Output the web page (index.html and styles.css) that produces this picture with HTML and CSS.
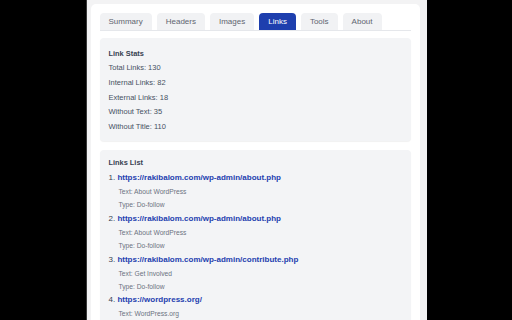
FILE: index.html
```html
<!DOCTYPE html>
<html>
<head>
<meta charset="utf-8">
<link rel="stylesheet" href="styles.css">
</head>
<body>
<div class="panel">
  <div class="card">
    <div class="tabs">
      <div class="tab">Summary</div>
      <div class="tab">Headers</div>
      <div class="tab">Images</div>
      <div class="tab active">Links</div>
      <div class="tab">Tools</div>
      <div class="tab">About</div>
    </div>
    <div class="box stats">
      <div class="title">Link Stats</div>
      <div class="row">Total Links: 130</div>
      <div class="row">Internal Links: 82</div>
      <div class="row">External Links: 18</div>
      <div class="row">Without Text: 35</div>
      <div class="row">Without Title: 110</div>
    </div>
    <div class="box list">
      <div class="title">Links List</div>
      <div class="item">
        <div class="link">1. <a>https://rakibalom.com/wp-admin/about.php</a></div>
        <div class="sub">Text: About WordPress</div>
        <div class="sub">Type: Do-follow</div>
      </div>
      <div class="item">
        <div class="link">2. <a>https://rakibalom.com/wp-admin/about.php</a></div>
        <div class="sub">Text: About WordPress</div>
        <div class="sub">Type: Do-follow</div>
      </div>
      <div class="item">
        <div class="link">3. <a>https://rakibalom.com/wp-admin/contribute.php</a></div>
        <div class="sub">Text: Get Involved</div>
        <div class="sub">Type: Do-follow</div>
      </div>
      <div class="item">
        <div class="link">4. <a>https://wordpress.org/</a></div>
        <div class="sub">Text: WordPress.org</div>
      </div>
    </div>
  </div>
</div>
</body>
</html>
```
FILE: styles.css
```css
html, body {
  margin: 0;
  padding: 0;
  background: #000;
  height: 100%;
  overflow: hidden;
  font-family: "Liberation Sans", Arial, sans-serif;
}
.panel {
  width: 341px;
  height: 320px;
  margin: 0 auto;
  box-sizing: border-box;
  background: #f3f3f4;
  border-left: 1px solid #3a3a3a;
  padding: 4px 7px 0 4px;
  overflow: hidden;
}
.card {
  background: #fff;
  border-radius: 5px 5px 0 0;
  padding: 9px 9px 0 9px;
  height: 400px;
}
.tabs {
  display: flex;
  gap: 5px;
  border-bottom: 1px solid #e5e7eb;
}
.tab {
  height: 17px;
  line-height: 17px;
  padding: 0 9px;
  font-size: 8px;
  color: #5f6570;
  background: #f1f2f4;
  border-radius: 4px 4px 0 0;
}
.tab.active {
  background: #1e3fae;
  color: #fff;
}
.box {
  background: #f3f4f6;
  border-radius: 4px;
  box-shadow: 0 1px 1px rgba(0,0,0,0.06);
  padding: 0 9px;
}
.stats {
  margin-top: 7px;
  padding-top: 8px;
  padding-bottom: 6px;
}
.title {
  font-size: 7.4px;
  font-weight: bold;
  color: #374151;
  line-height: 15px;
}
.row {
  font-size: 7.5px;
  color: #465062;
  line-height: 14.8px;
}
.list {
  margin-top: 9px;
  padding-top: 5px;
  height: 300px;
}
.list .title {
  line-height: 16px;
}
.link {
  font-size: 8px;
  line-height: 14px;
  color: #374151;
  white-space: nowrap;
}
.link a {
  color: #1e40af;
  font-weight: bold;
}
.sub {
  font-size: 6.7px;
  line-height: 13.4px;
  color: #6b7280;
  padding-left: 10px;
}
```
